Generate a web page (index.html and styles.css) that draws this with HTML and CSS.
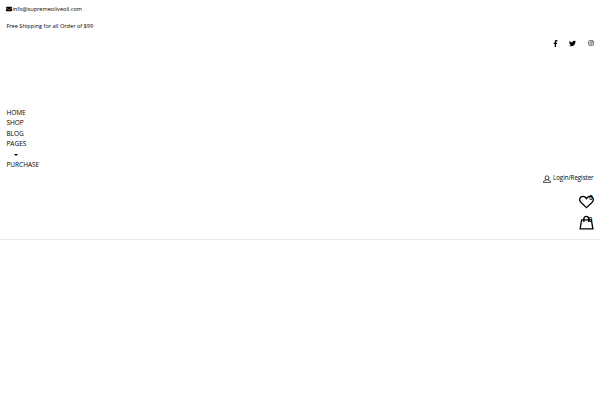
FILE: index.html
```
<!DOCTYPE html>
<html lang="en">
<head>
<meta charset="utf-8">
<title>Supreme Olive Oil</title>
<link rel="stylesheet" href="styles.css">
</head>
<body>
<header class="header">
  <div class="contact"><svg class="mail" viewBox="0 0 512 512"><path d="M48 64C22 64 0 86 0 112c0 15 7 29 19 38l218 163c11 9 27 9 38 0l218-163c12-9 19-23 19-38 0-26-22-48-48-48zM0 176v208c0 35 29 64 64 64h384c35 0 64-29 64-64V176L294 339c-23 17-53 17-76 0z"/></svg><span>info@supremeoliveoil.com</span></div>
  <p class="shipping">Free Shipping for all Order of $99</p>
  <div class="social">
    <svg class="facebook" viewBox="0 0 320 512"><path d="M279 288l14-93h-89v-60c0-25 13-50 53-50h40V7s-37-7-72-7c-73 0-121 44-121 125v70H23v93h81v224h100V288z"/></svg>
    <svg class="twitter" viewBox="0 0 512 512"><path d="M459 152c1 5 1 9 1 14 0 138-106 298-299 298-59 0-114-17-161-47 58 7 111-10 155-44-46-1-84-31-97-73 16 2 31 2 47-2-48-10-84-52-84-103v-1c14 8 30 12 47 13-45-31-59-91-32-141 52 64 129 105 216 109-16-75 41-129 103-129 30 0 57 13 76 33 24-5 46-13 67-25-8 24-25 45-46 58 21-3 42-8 60-16-14 21-32 40-53 56z"/></svg>
    <svg class="instagram" viewBox="0 0 16 16"><rect x="1.2" y="1.2" width="13.6" height="13.6" rx="4"/><circle cx="8" cy="8" r="3.3"/><circle cx="11.8" cy="4.2" r=".5"/></svg>
  </div>
  <nav class="menu">
    <a>HOME</a>
    <a>SHOP</a>
    <a>BLOG</a>
    <a>PAGES</a>
    <span class="toggle"><i class="caret"></i></span>
    <a>PURCHASE</a>
  </nav>
  <div class="account">
    <svg class="user" viewBox="0 0 16 16"><circle cx="8" cy="5.7" r="4"/><path d="M5.7 9v1.3L1.5 12c-.5.4-.7 1.5-.7 2.8h14.4c0-1.3-.2-2.4-.7-2.8l-4.2-1.7V9"/></svg>
    <span>Login/Register</span>
  </div>
  <div class="action wishlist">
    <svg class="heart" viewBox="0 0 16 14"><path d="M8 13L2.2 7.5C-.7 4.6 1 1 4.2 1 6 1 7.2 2 8 3.3 8.8 2 10 1 11.8 1 15 1 16.7 4.6 13.8 7.5z"/></svg>
    <span class="count">0</span>
  </div>
  <div class="action cart">
    <svg class="bag" viewBox="0 0 16 16"><path d="M2.8 4.7h10.4l1.6 9.6H1.2zM5.2 7V3.6C5.2 0 10.3 0 10.3 3.6V7"/></svg>
    <span class="count">0</span>
  </div>
</header>
</body>
</html>
```

FILE: styles.css
```
* {
  box-sizing: border-box;
}

body {
  margin: 0;
  background: #fff;
  color: #000;
  font-family: "Open Sans", sans-serif;
}

svg {
  display: block;
}

.header {
  display: flex;
  flex-direction: column;
  height: 240px;
  padding: 4px 6.4px 0;
  border-bottom: 1px solid #e8e8e8;
  box-shadow: 0 1px 2px #f0f0f0;
}

.contact {
  display: flex;
  align-items: center;
  height: 10px;
  font-size: 5.62px;
}

.mail {
  width: 6px;
  height: 6px;
}

.shipping {
  height: 10px;
  margin: 7px 0 0;
  font-size: 5.62px;
  line-height: 10px;
}

.social {
  display: flex;
  justify-content: flex-end;
  align-items: center;
  height: 10px;
  margin-top: 7px;
}

.facebook {
  width: 5px;
  height: 7px;
  margin-right: 11px;
}

.twitter {
  width: 7px;
  height: 7px;
  margin-right: 12px;
}

.instagram {
  width: 6px;
  height: 6px;
  fill: none;
  stroke: #222;
  stroke-width: 1.6;
}

.menu {
  display: flex;
  flex-direction: column;
  align-items: flex-start;
  margin-top: 60px;
  font-size: 6.5px;
  line-height: 10.35px;
}

.toggle {
  display: flex;
  align-items: center;
  height: 10.35px;
  padding-left: 8px;
}

.caret {
  border: 2px solid transparent;
  border-top-color: #000;
  border-bottom: 0;
}

.account {
  display: flex;
  justify-content: flex-end;
  gap: 1.5px;
  height: 12px;
  margin-top: 3px;
  font-size: 6.2px;
  line-height: 10px;
  letter-spacing: -0.05px;
}

.user {
  width: 8px;
  height: 8px;
  margin-top: 2px;
}

.user,
.heart,
.bag {
  fill: none;
  stroke: #000;
  stroke-width: 1.4;
}

.action {
  position: relative;
  align-self: flex-end;
  width: 15px;
}

.wishlist {
  margin-top: 10px;
}

.cart {
  margin-top: 6px;
}

.heart {
  width: 15px;
  height: 14px;
}

.bag {
  width: 15px;
  height: 16px;
}

.count {
  position: absolute;
  top: -1px;
  right: 1px;
  font-size: 6.5px;
  font-weight: 600;
  line-height: 8px;
}

.cart .count {
  top: 1px;
  right: 1.5px;
}
```
